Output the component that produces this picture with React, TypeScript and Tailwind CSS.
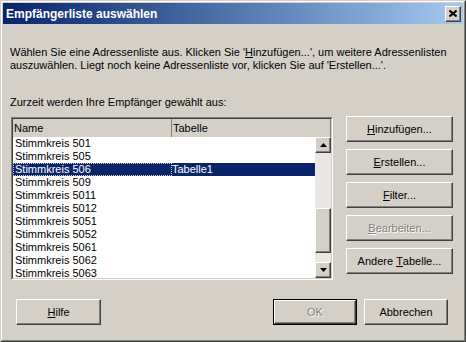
import React from "react";

const rows = [
  { name: "Stimmkreis 501", table: "" },
  { name: "Stimmkreis 505", table: "" },
  { name: "Stimmkreis 506", table: "Tabelle1", selected: true },
  { name: "Stimmkreis 509", table: "" },
  { name: "Stimmkreis 5011", table: "" },
  { name: "Stimmkreis 5012", table: "" },
  { name: "Stimmkreis 5051", table: "" },
  { name: "Stimmkreis 5052", table: "" },
  { name: "Stimmkreis 5061", table: "" },
  { name: "Stimmkreis 5062", table: "" },
  { name: "Stimmkreis 5063", table: "" },
];

const raised =
  "border border-t-white border-l-white border-r-[#404040] border-b-[#404040] shadow-[inset_-1px_-1px_#808080] bg-[#d4d0c8]";

const Btn = ({
  children,
  disabled,
  className = "",
}: {
  children: React.ReactNode;
  disabled?: boolean;
  className?: string;
}) => (
  <div
    className={`${raised} h-[26px] flex items-center justify-center ${
      disabled ? "text-[#808080] [text-shadow:1px_1px_0_#fff]" : "text-black"
    } ${className}`}
  >
    {children}
  </div>
);

const Arrow = ({ up }: { up?: boolean }) => (
  <svg width="7" height="4" viewBox="0 0 7 4">
    {up ? <path d="M3.5 0 L7 4 L0 4 Z" fill="#000" /> : <path d="M0 0 L7 0 L3.5 4 Z" fill="#000" />}
  </svg>
);

const U = ({ c }: { c: string }) => <span className="underline underline-offset-[1px]">{c}</span>;

export default function App() {
  return (
    <div className="w-[466px] h-[342px] bg-[#d4d0c8] border border-t-[#d4d0c8] border-l-[#d4d0c8] border-r-[#404040] border-b-[#404040] font-['Liberation_Sans',Arial,sans-serif] text-[11px] text-black">
      <div className="h-full border border-t-white border-l-white border-r-[#808080] border-b-[#808080] p-px flex flex-col">
        {/* title bar */}
        <div className="h-[21px] bg-gradient-to-r from-[#0a246a] to-[#a6caf0] flex items-center justify-between pl-[3px] pr-[2px]">
          <span className="text-white font-bold text-[12px] leading-none">Empfängerliste auswählen</span>
          <div className={`${raised} w-[16px] h-[16px] flex items-center justify-center`}>
            <svg width="8" height="7" viewBox="0 0 8 7">
              <path d="M0.5 0.5 L7.5 6.5 M7.5 0.5 L0.5 6.5" stroke="#000" strokeWidth="2" />
            </svg>
          </div>
        </div>

        {/* body */}
        <div className="flex-1 flex flex-col">
          <p className="mt-[22px] ml-[7px] leading-[13px]">
            Wählen Sie eine Adressenliste aus. Klicken Sie '<U c="H" />inzufügen...', um weitere Adressenlisten
            <br />
            auszuwählen. Liegt noch keine Adressenliste vor, klicken Sie auf 'Erstellen...'.
          </p>
          <p className="mt-[24px] ml-[7px] leading-[13px]">Zurzeit werden Ihre Empfänger gewählt aus:</p>

          <div className="mt-[7px] flex items-start">
            {/* list box */}
            <div className="mt-px ml-[8px] w-[322px] h-[163px] border border-t-[#808080] border-l-[#808080] border-r-white border-b-white">
              <div className="h-full border border-t-[#404040] border-l-[#404040] border-r-[#d4d0c8] border-b-[#d4d0c8] bg-white flex flex-col">
                <div className="h-[18px] bg-[#d4d0c8] flex">
                  <div className="w-[159px] border-r border-[#808080] pl-px flex items-center">Name</div>
                  <div className="flex-1 border-r border-[#808080] pl-px flex items-center">Tabelle</div>
                </div>
                <div className="flex-1 flex overflow-hidden">
                  <div className="flex-1 flex flex-col">
                    {rows.map((r) => (
                      <div
                        key={r.name}
                        className={`h-[13px] shrink-0 flex leading-[13px] ${
                          r.selected ? "bg-[#0a246a] text-white" : ""
                        }`}
                      >
                        <div
                          className={`w-[159px] pl-[2px] ${
                            r.selected ? "border border-dotted border-[#d8d8b8] pl-px leading-[11px]" : ""
                          }`}
                        >
                          {r.name}
                        </div>
                        <div className="flex-1">{r.table}</div>
                      </div>
                    ))}
                  </div>
                  {/* scrollbar */}
                  <div className="w-[16px] bg-[#e9e7e3] flex flex-col">
                    <div className={`${raised} h-[16px] shrink-0 flex items-center justify-center`}>
                      <Arrow up />
                    </div>
                    <div className="flex-1 flex flex-col">
                      <div className="h-[55px]" />
                      <div className={`${raised} h-[45px]`} />
                    </div>
                    <div className={`${raised} h-[16px] shrink-0 flex items-center justify-center`}>
                      <Arrow />
                    </div>
                  </div>
                </div>
              </div>
            </div>

            {/* side buttons */}
            <div className="ml-[13px] w-[107px] flex flex-col gap-[7px]">
              <Btn>
                <U c="H" />
                inzufügen...
              </Btn>
              <Btn>
                <U c="E" />
                rstellen...
              </Btn>
              <Btn>
                <U c="F" />
                ilter...
              </Btn>
              <Btn disabled>
                <U c="B" />
                earbeiten...
              </Btn>
              <Btn>
                Andere&nbsp;<U c="T" />
                abelle...
              </Btn>
            </div>
          </div>

          {/* bottom buttons */}
          <div className="mt-[19px] flex">
            <Btn className="ml-[13px] w-[85px]">
              <U c="H" />
              ilfe
            </Btn>
            <div className="ml-auto w-[84px] h-[26px] border border-black">
              <Btn disabled className="h-full w-full">
                OK
              </Btn>
            </div>
            <Btn className="ml-[7px] mr-[15px] w-[84px]">Abbrechen</Btn>
          </div>
        </div>
      </div>
    </div>
  );
}
